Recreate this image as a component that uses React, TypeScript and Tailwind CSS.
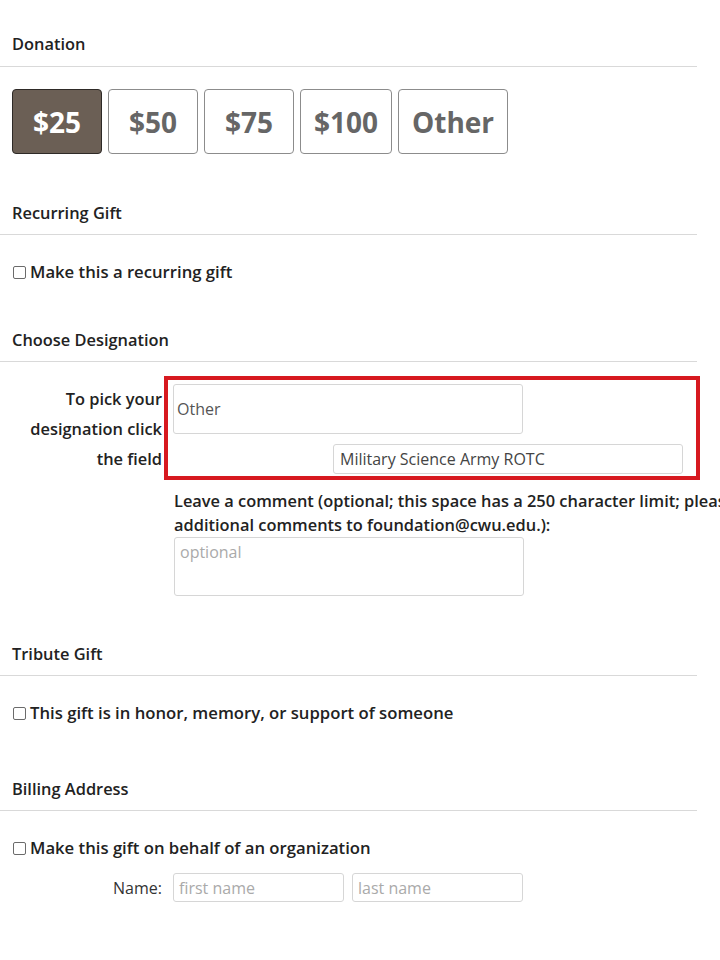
import React from "react";

function Heading({ children, className = "" }: { children: React.ReactNode; className?: string }) {
  return (
    <div className={`w-[697px] border-b border-[#d9d9d9] pl-[12px] pb-[9px] text-[16.4px] font-semibold leading-[24px] text-[#222] ${className}`}>
      {children}
    </div>
  );
}

function Check({ label, className = "" }: { label: string; className?: string }) {
  return (
    <div className={`flex items-center pl-[13px] text-[16.7px] font-semibold leading-[24px] text-[#222] ${className}`}>
      <span className="mr-[4px] inline-block h-[13px] w-[13px] rounded-[2px] border border-[#6b6b6b] bg-white" />
      {label}
    </div>
  );
}

export default function App() {
  const amounts = [
    { t: "$25", w: "w-[90px]", active: true },
    { t: "$50", w: "w-[90px]", active: false },
    { t: "$75", w: "w-[90px]", active: false },
    { t: "$100", w: "w-[92px]", active: false },
    { t: "Other", w: "w-[110px]", active: false },
  ];
  return (
    <div className="w-[720px] min-h-[960px] overflow-hidden bg-white" style={{ fontFamily: '"Open Sans", "Noto Sans", sans-serif' }}>
      <Heading className="pt-[32px] pb-[10px]">Donation</Heading>

      <div className="mt-[22px] flex gap-[6px] pl-[12px]">
        {amounts.map((a) => (
          <div
            key={a.t}
            className={`flex h-[65px] ${a.w} items-center justify-center rounded-[4px] border text-[28px] font-bold leading-none ${
              a.active ? "border-[#2e2a27] bg-[#6b5f55] text-white" : "border-[#8c8c8c] bg-white text-[#666]"
            }`}
          >
            {a.t}
          </div>
        ))}
      </div>

      <Heading className="mt-[47px]">Recurring Gift</Heading>
      <Check className="mt-[25px]" label="Make this a recurring gift" />

      <Heading className="mt-[44px]">Choose Designation</Heading>

      <div className="relative mt-[22px]">
        <div className="flex">
          <div className="w-[162px] text-right text-[16.4px] font-semibold leading-[30px] text-[#222]">
            To pick your
            <br />
            designation click
            <br />
            the field
          </div>
          <div className="ml-[11px] flex flex-col">
            <div className="flex h-[50px] w-[350px] items-center rounded-[3px] border border-[#d6d6d6] pl-[3px] text-[16px] text-[#555]">
              Other
            </div>
            <div className="ml-[160px] mt-[10px] flex h-[30px] w-[350px] items-center rounded-[3px] border border-[#d6d6d6] pl-[6px] text-[16px] text-[#444]">
              Military Science Army ROTC
            </div>
          </div>
        </div>
        <div className="pointer-events-none absolute left-[164px] top-[-8px] h-[104px] w-[536px] border-[4px] border-[#d71920]" />
      </div>

      <div className="ml-[174px] mt-[15px] w-[546px] overflow-hidden">
        <div className="whitespace-nowrap text-[16.4px] font-semibold leading-[24px] text-[#222]">
          Leave a comment (optional; this space has a 250 character limit; please send
          <br />
          additional comments to foundation@cwu.edu.):
        </div>
        <div className="h-[59px] w-[350px] rounded-[3px] border border-[#d6d6d6] pl-[5px] pt-[2px] text-[16px] leading-[24px] text-[#aaa]">
          optional
        </div>
      </div>

      <Heading className="mt-[46px]">Tribute Gift</Heading>
      <Check className="mt-[25px]" label="This gift is in honor, memory, or support of someone" />

      <Heading className="mt-[52px]">Billing Address</Heading>
      <Check className="mt-[25px]" label="Make this gift on behalf of an organization" />

      <div className="mt-[13px] flex items-center">
        <div className="w-[162px] text-right text-[16px] leading-[24px] text-[#333]">Name:</div>
        <div className="ml-[11px] flex h-[29px] w-[171px] items-center rounded-[3px] border border-[#d6d6d6] pl-[5px] text-[16px] text-[#aaa]">
          first name
        </div>
        <div className="ml-[8px] flex h-[29px] w-[171px] items-center rounded-[3px] border border-[#d6d6d6] pl-[5px] text-[16px] text-[#aaa]">
          last name
        </div>
      </div>
    </div>
  );
}
